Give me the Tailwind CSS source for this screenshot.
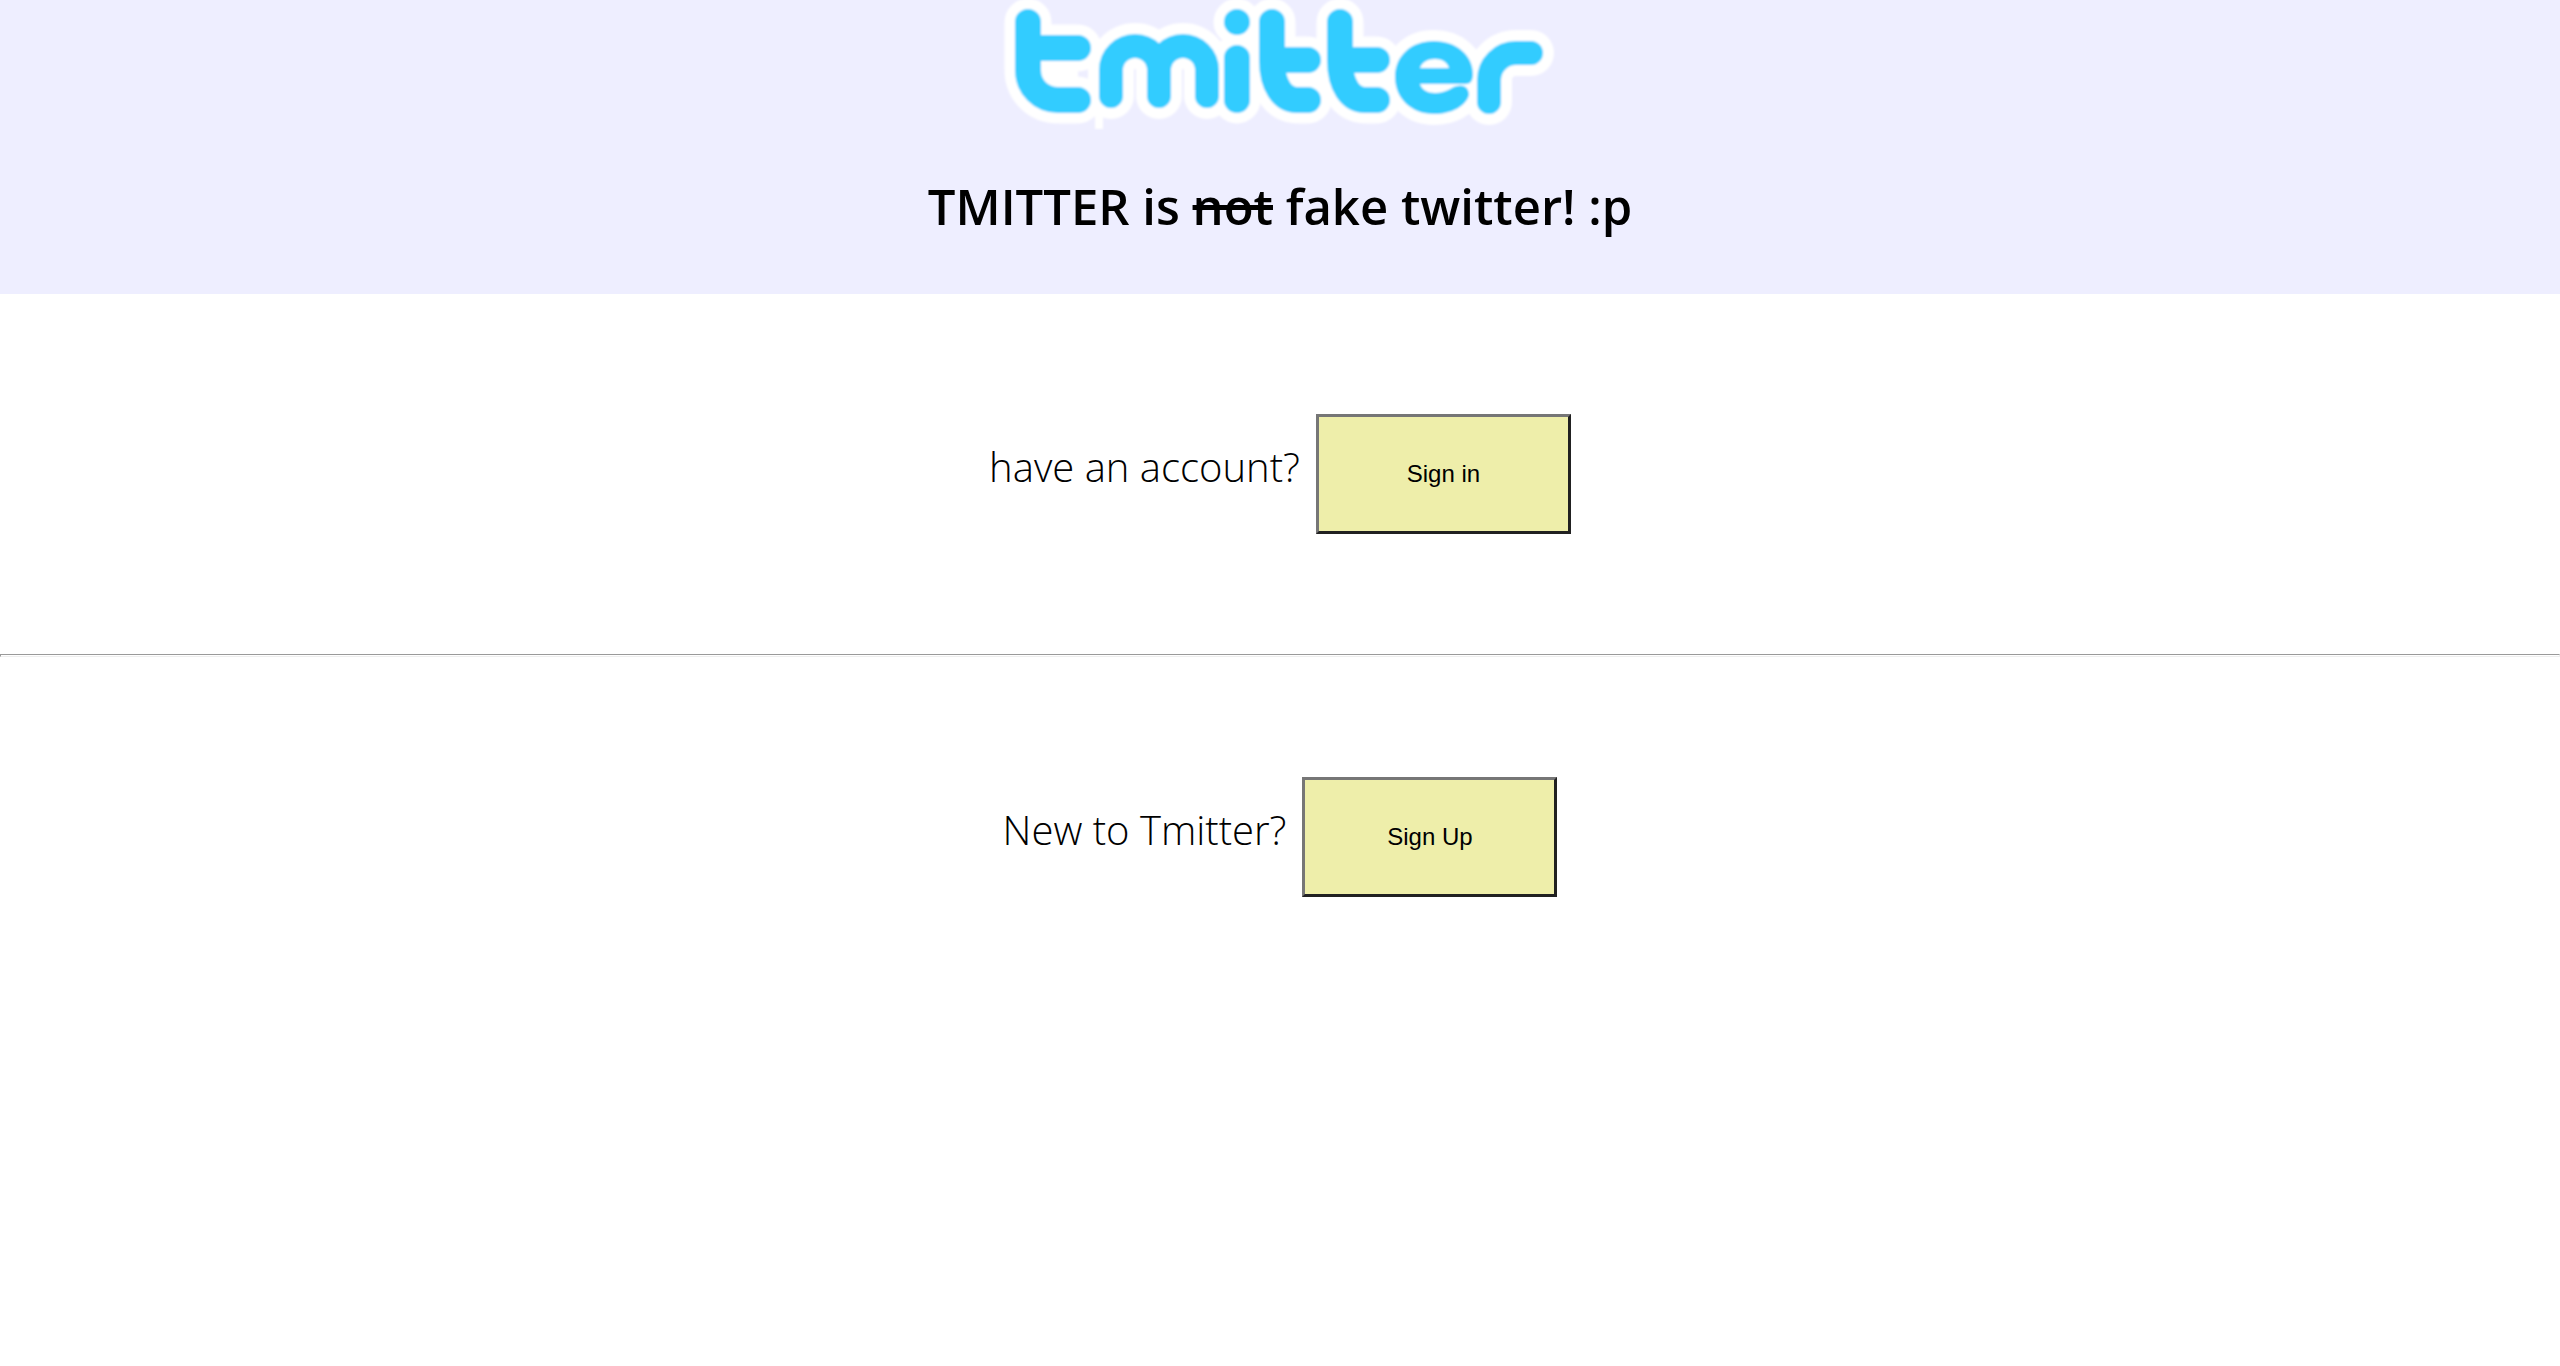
<!DOCTYPE html>
<html lang="en">
<head>
  <meta charset="UTF-8" />
  <meta name="viewport" content="width=device-width, initial-scale=1.0" />
  <title>Tmitter</title>
  <script src="https://cdn.jsdelivr.net/npm/@tailwindcss/browser@4"></script>
</head>
<body class="bg-white text-black font-['Open_Sans','Noto_Sans',sans-serif]">

  <!-- Header -->
  <header class="bg-[#eeeeff] flex flex-col items-center pb-14">
    <svg class="w-[560px] h-[130px]" viewBox="1000 0 560 130" fill="none" stroke-linecap="round" stroke-linejoin="round" role="img" aria-label="tmitter">
      <defs>
        <filter id="soft" filterUnits="userSpaceOnUse" x="990" y="-20" width="580" height="170">
          <feGaussianBlur stdDeviation="1" />
        </filter>
        <g id="thick">
          <path d="M1028 22V70C1028 87 1041 100 1058 100H1078M1028 48H1078" />
          <path d="M1237 22V22M1237 58V100" />
          <path d="M1272 22V60C1272 86 1283 100 1297 100H1308M1272 60H1308" />
          <path d="M1340 22V60C1340 86 1351 100 1365 100H1377M1340 60H1377" />
        </g>
        <g id="thin">
          <path d="M1111 96V70A24 24 0 0 1 1159 70V96M1159 70A24 24 0 0 1 1207 70V96" />
          <path d="M1489 102V80A27 27 0 0 1 1516 53H1531" />
        </g>
        <path id="letter-e" d="M1434 41C1456 41 1473 55 1473 74C1473 80 1471 84 1466 84L1457 86C1464 84 1469 88 1469 95C1466 106 1452 114 1434 114C1411 114 1395 98 1395 77C1395 56 1411 41 1434 41Z" />
      </defs>
      <g filter="url(#soft)">
        <g stroke="#fff" fill="#fff">
          <use href="#thick" stroke-width="47" fill="none" />
          <use href="#thin" stroke-width="46" fill="none" />
          <use href="#letter-e" stroke-width="22" />
          <path d="M1095 110H1103V129H1095Z" stroke="none" />
          <!-- fills the counters of the t shapes -->
          <path d="M1040 60H1078V88H1040Z" stroke="none" />
        </g>
        <g stroke="#33ccff">
          <use href="#thick" stroke-width="26" />
          <use href="#thin" stroke-width="24" />
        </g>
        <use href="#letter-e" fill="#33ccff" />
        <path d="M1420 68C1422 62 1428 59 1435 59C1442 59 1447 62 1449 68Z" fill="#fff" />
        <path d="M1420 84H1468L1457 86C1451 87 1447 93 1435 93C1428 93 1422 90 1420 84Z" fill="#fff" />
      </g>
    </svg>
    <h1 class="mt-11 text-[49px] leading-[64px] font-semibold">TMITTER is <s class="decoration-[5px]">not</s> fake twitter! :p</h1>
  </header>

  <!-- Sign in -->
  <section class="flex justify-center items-baseline gap-4 py-[120px]">
    <p class="text-[40px] leading-[56px] font-[340]">have an account?</p>
    <button type="button" class="w-[255px] h-[120px] bg-[#eeeeaa] border-3 border-t-[#767676] border-l-[#767676] border-r-[#212121] border-b-[#212121] font-['Liberation_Sans',sans-serif] text-2xl">Sign in</button>
  </section>

  <hr class="h-[3px] border border-t-[#9a9a9a] border-l-[#9a9a9a] border-r-[#eeeeee] border-b-[#eeeeee]" />

  <!-- Sign up -->
  <section class="flex justify-center items-baseline gap-4 py-[120px]">
    <p class="text-[40px] leading-[56px] font-[340]">New to Tmitter?</p>
    <button type="button" class="w-[255px] h-[120px] bg-[#eeeeaa] border-3 border-t-[#767676] border-l-[#767676] border-r-[#212121] border-b-[#212121] font-['Liberation_Sans',sans-serif] text-2xl">Sign Up</button>
  </section>

</body>
</html>
